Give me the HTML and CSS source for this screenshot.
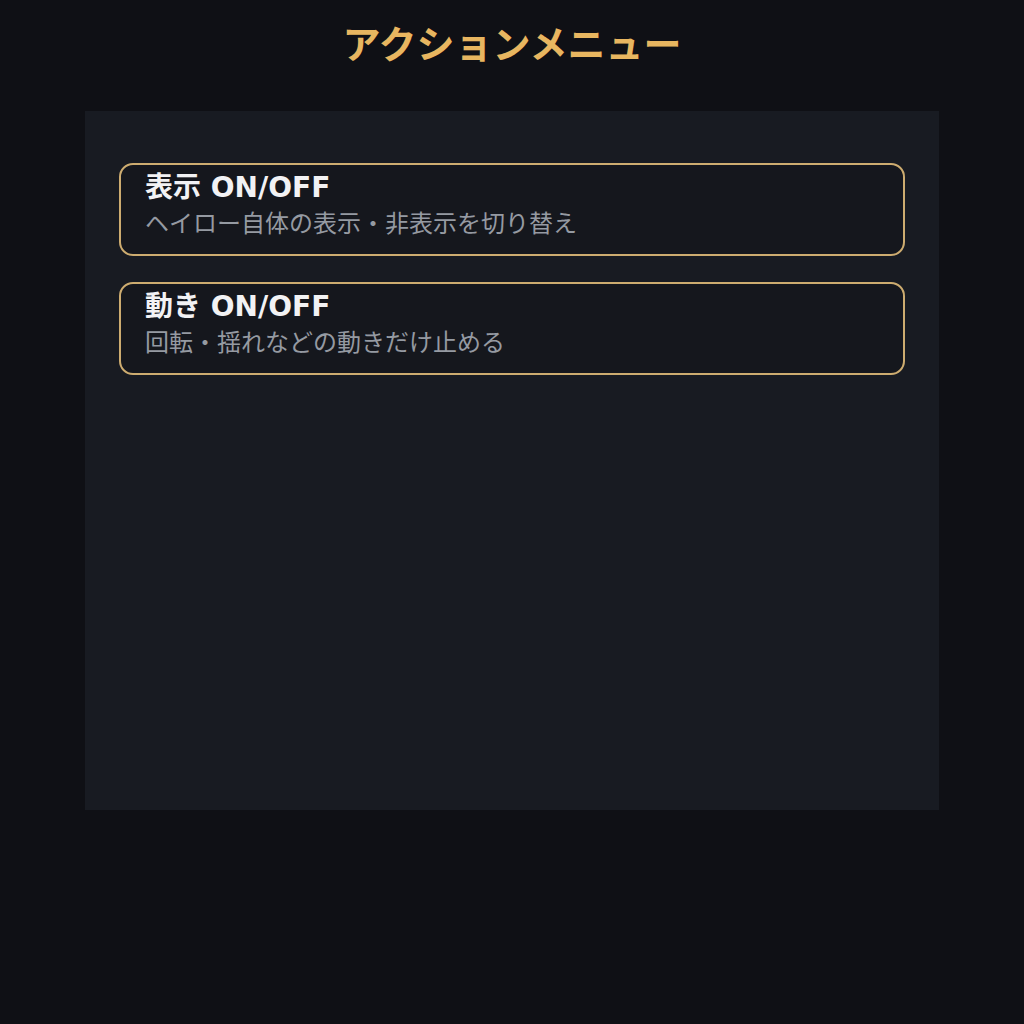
FILE: index.html
```html
<!DOCTYPE html>
<html lang="ja">
<head>
    <meta charset="UTF-8">
    <meta name="viewport" content="width=device-width, initial-scale=1.0">
    <title>アクションメニュー</title>
    <link rel="stylesheet" href="styles.css">
</head>
<body>
    <h1 class="page-title">アクションメニュー</h1>
    <div class="menu-panel">
        <div class="menu-item">
            <div class="item-title">表示 ON/OFF</div>
            <div class="item-desc">ヘイロー自体の表示・非表示を切り替え</div>
        </div>
        <div class="menu-item">
            <div class="item-title">動き ON/OFF</div>
            <div class="item-desc">回転・揺れなどの動きだけ止める</div>
        </div>
    </div>
</body>
</html>
```

FILE: styles.css
```css
body {
    font-family: "DejaVu Sans", "Noto Sans CJK JP", sans-serif;
    background-color: #0f1015;
    margin: 0;
    padding: 0;
    display: flex;
    flex-direction: column;
    align-items: center;
}

.page-title {
    color: #e8b660;
    font-size: 38px;
    font-weight: bold;
    line-height: 50px;
    margin: 20px 0 41px;
}

.menu-panel {
    width: 854px;
    height: 699px;
    box-sizing: border-box;
    background-color: #181b22;
    padding: 52px 34px;
    display: flex;
    flex-direction: column;
    gap: 26px;
}

.menu-item {
    border: 2px solid #cdac70;
    border-radius: 14px;
    background-color: #15171d;
    padding: 4px 24px 13px;
    height: 93px;
    box-sizing: border-box;
}

.item-title {
    color: #f2f2f4;
    font-size: 28px;
    font-weight: bold;
    line-height: 38px;
}

.item-desc {
    color: #959aa2;
    font-size: 24px;
    line-height: 34px;
}
```
